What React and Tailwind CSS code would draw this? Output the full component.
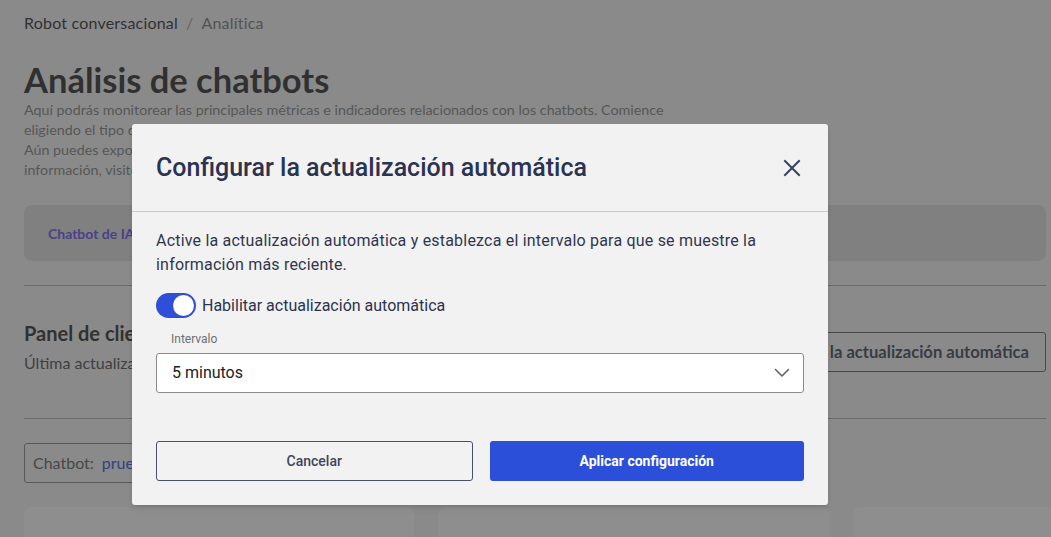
import React from "react";

function XIcon() {
  return (
    <svg width="24" height="24" viewBox="0 0 24 24" fill="none">
      <path d="M5 5 L19 19 M19 5 L5 19" stroke="#3a4260" strokeWidth="2" strokeLinecap="square" />
    </svg>
  );
}

function Chevron() {
  return (
    <svg width="16" height="10" viewBox="0 0 16 10" fill="none">
      <path d="M1.5 1.5 L8 8 L14.5 1.5" stroke="#5f6368" strokeWidth="1.6" strokeLinecap="round" strokeLinejoin="round" />
    </svg>
  );
}

export default function App() {
  return (
    <div className="relative h-[537px] w-[1051px] overflow-hidden bg-[#f6f6f6] font-['Lato',sans-serif]">
      {/* background page */}
      <div className="pl-6 pr-[5px] pt-3">
        <div className="flex items-center gap-2 text-[16px] leading-[22px] tracking-[0.2px]">
          <span className="text-[#222222]">Robot conversacional</span>
          <span className="text-[#9a9a9a]">/</span>
          <span className="text-[#707070]">Analítica</span>
        </div>
        <h1 className="mt-7 text-[34.5px] font-bold leading-[36px] text-[#1f1f1f]">Análisis de chatbots</h1>
        <p className="mt-[2px] w-[690px] text-[14.3px] leading-[20px] text-[#7a7a7a]">
          Aquí podrás monitorear las principales métricas e indicadores relacionados con los chatbots. Comience
          <br />
          eligiendo el tipo de chatbot que desea consultar en las pestañas de abajo.
          <br />
          Aún puedes exportar los datos a un archivo para su análisis. Para obtener más
          <br />
          información, visite nuestro centro de ayuda.
        </p>
        <div className="mt-[25px] flex h-14 items-center rounded-lg bg-[#dedede] px-6">
          <span className="text-[14px] font-bold text-[#5b45f0]">Chatbot de IA</span>
          <span className="ml-10 text-[14px] font-bold text-[#555555]">Chatbot de reglas</span>
        </div>
        <div className="mt-6 border-t border-[#a9a9a9]" />
        <div className="flex items-start justify-between">
          <div className="mt-[33px]">
            <div className="text-[20px] font-bold leading-[28px] text-[#222222]">Panel de clientes</div>
            <div className="mt-1 text-[16px] leading-[24px] text-[#444444]">Última actualización: hace 5 minutos</div>
          </div>
          <div className="mt-[46px] flex h-10 items-center rounded-[3px] border border-[#5a5a5a] px-4 text-[16.6px] font-bold text-[#333a4d]">
            Configurar la actualización automática
          </div>
        </div>
        <div className="mt-[43px] border-t border-[#a9a9a9]" />
        <div className="mt-6 flex h-10 w-[300px] items-center rounded-[3px] border border-[#838383] px-2 text-[16px]">
          <span className="text-[#555555]">Chatbot:</span>
          <span className="ml-2 text-[#2846e0]">prueba</span>
        </div>
        <div className="mt-6 flex gap-6">
          <div className="h-[200px] w-[390px] shrink-0 rounded-lg bg-white" />
          <div className="h-[200px] w-[391px] shrink-0 rounded-lg bg-white" />
          <div className="h-[200px] w-[391px] shrink-0 rounded-lg bg-white" />
        </div>
      </div>

      {/* overlay */}
      <div className="absolute inset-0 bg-[rgba(60,60,60,0.58)]" />

      {/* dialog */}
      <div className="absolute left-[132px] top-[124px] w-[696px] rounded-[3px] bg-[#f2f2f2] font-['Roboto',sans-serif] shadow-md">
        <div className="flex h-[88px] items-center justify-between border-b border-[#c3cad6] pl-6 pr-6">
          <h2 className="text-[25px] font-medium text-[#2b3350]">Configurar la actualización automática</h2>
          <XIcon />
        </div>
        <div className="px-6 pb-6 pt-[17px]">
          <p className="text-[16px] leading-[24px] tracking-[0.2px] text-[#30364f]">
            Active la actualización automática y establezca el intervalo para que se muestre la información más reciente.
          </p>
          <div className="mt-4 flex items-center gap-[6px]">
            <div className="flex h-[25px] w-10 items-center justify-end rounded-full bg-[#2f4fd8] p-[2px]">
              <div className="h-[21px] w-[21px] rounded-full bg-white" />
            </div>
            <span className="text-[16px] text-[#2b3350]">Habilitar actualización automática</span>
          </div>
          <div className="mt-[13px] pl-[15px] text-[12px] leading-[16px] text-[#6e6e6e]">Intervalo</div>
          <div className="mt-[6px] flex h-10 items-center justify-between rounded-[3px] border border-[#8c8c8c] bg-white pl-[15px] pr-[13px]">
            <span className="text-[16px] text-[#222222]">5 minutos</span>
            <Chevron />
          </div>
          <div className="mt-[48px] flex gap-[17px]">
            <button className="flex h-10 flex-1 items-center justify-center rounded-[3px] border border-[#4a5068] text-[14px] font-medium text-[#3d4560]">
              Cancelar
            </button>
            <button className="flex h-10 flex-1 items-center justify-center rounded-[3px] bg-[#2b4fd8] text-[14px] font-bold text-white">
              Aplicar configuración
            </button>
          </div>
        </div>
      </div>
    </div>
  );
}
